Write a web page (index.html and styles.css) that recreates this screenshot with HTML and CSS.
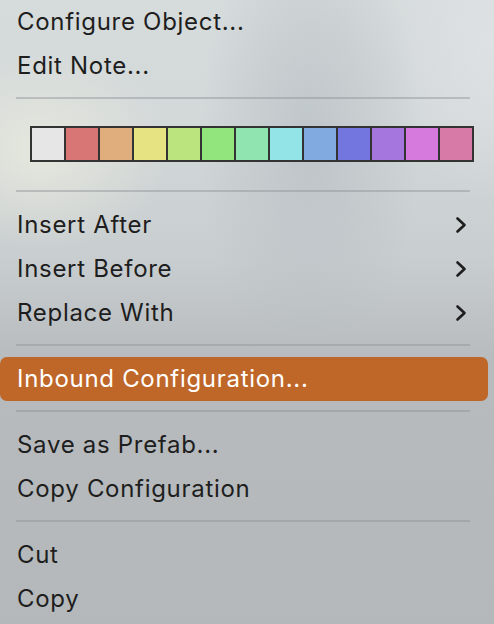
FILE: index.html
```html
<!DOCTYPE html>
<html>
<head>
<meta charset="utf-8">
<link rel="stylesheet" href="styles.css">
</head>
<body>
<div class="menu">
  <div class="item">Configure Object...</div>
  <div class="item">Edit Note...</div>
  <div class="sep"></div>
  <div class="swatches">
    <span class="sw" style="background:#e6e6e6"></span>
    <span class="sw" style="background:#d87676"></span>
    <span class="sw" style="background:#e0ae7c"></span>
    <span class="sw" style="background:#e6e482"></span>
    <span class="sw" style="background:#bce47e"></span>
    <span class="sw" style="background:#92e47c"></span>
    <span class="sw" style="background:#90e4b0"></span>
    <span class="sw" style="background:#92e4e6"></span>
    <span class="sw" style="background:#80aae0"></span>
    <span class="sw" style="background:#7476e0"></span>
    <span class="sw" style="background:#a476de"></span>
    <span class="sw" style="background:#d67ade"></span>
    <span class="sw" style="background:#d87aa8"></span>
  </div>
  <div class="sep"></div>
  <div class="item sub">Insert After<svg class="chev" viewBox="0 0 12 18"><path d="M2.5 2.5 L9.5 9 L2.5 15.5"/></svg></div>
  <div class="item sub">Insert Before<svg class="chev" viewBox="0 0 12 18"><path d="M2.5 2.5 L9.5 9 L2.5 15.5"/></svg></div>
  <div class="item sub">Replace With<svg class="chev" viewBox="0 0 12 18"><path d="M2.5 2.5 L9.5 9 L2.5 15.5"/></svg></div>
  <div class="sep"></div>
  <div class="item active">Inbound Configuration...</div>
  <div class="sep"></div>
  <div class="item">Save as Prefab...</div>
  <div class="item">Copy Configuration</div>
  <div class="sep"></div>
  <div class="item">Cut</div>
  <div class="item">Copy</div>
</div>
</body>
</html>
```
FILE: styles.css
```css
html, body {
  margin: 0;
  padding: 0;
  width: 494px;
  height: 624px;
  overflow: hidden;
}
body {
  font-family: "Inter", "Liberation Sans", sans-serif;
  background:
    radial-gradient(ellipse 130px 100px at 40px 150px, rgba(232,234,222,0.9), rgba(232,234,222,0) 100%),
    radial-gradient(ellipse 110px 230px at 310px 140px, rgba(182,189,194,0.7), rgba(182,189,194,0) 100%),
    radial-gradient(ellipse 100px 160px at 490px 40px, rgba(223,226,228,0.9), rgba(223,226,228,0) 100%),
    linear-gradient(180deg, #d6dbdc 0px, #d3d8d9 120px, #c8cdcf 260px, #b7bbbd 360px, #b4b8ba 624px);
}
.menu {
  width: 488px;
  display: flex;
  flex-direction: column;
}
.item {
  height: 44px;
  line-height: 44px;
  font-size: 24px;
  letter-spacing: 0.7px;
  color: #1e1e1e;
  padding: 0 21px 0 17px;
  display: flex;
  align-items: center;
  justify-content: space-between;
  white-space: nowrap;
}
.item.active {
  background: #bf6629;
  color: #ffffff;
  border-radius: 7px;
}
.chev {
  width: 12px;
  height: 18px;
  fill: none;
  stroke: #1e1e1e;
  stroke-width: 2.6;
  stroke-linecap: round;
  stroke-linejoin: round;
}
.sep {
  height: 2px;
  margin: 9px 18px 11px 16px;
  background: rgba(140,146,150,0.45);
}
.swatches {
  display: flex;
  gap: 2px;
  padding: 2px;
  background: #333333;
  align-self: flex-start;
  margin: 16px 0 19px 30px;
}
.sw {
  display: block;
  width: 32px;
  height: 32px;
}
```
